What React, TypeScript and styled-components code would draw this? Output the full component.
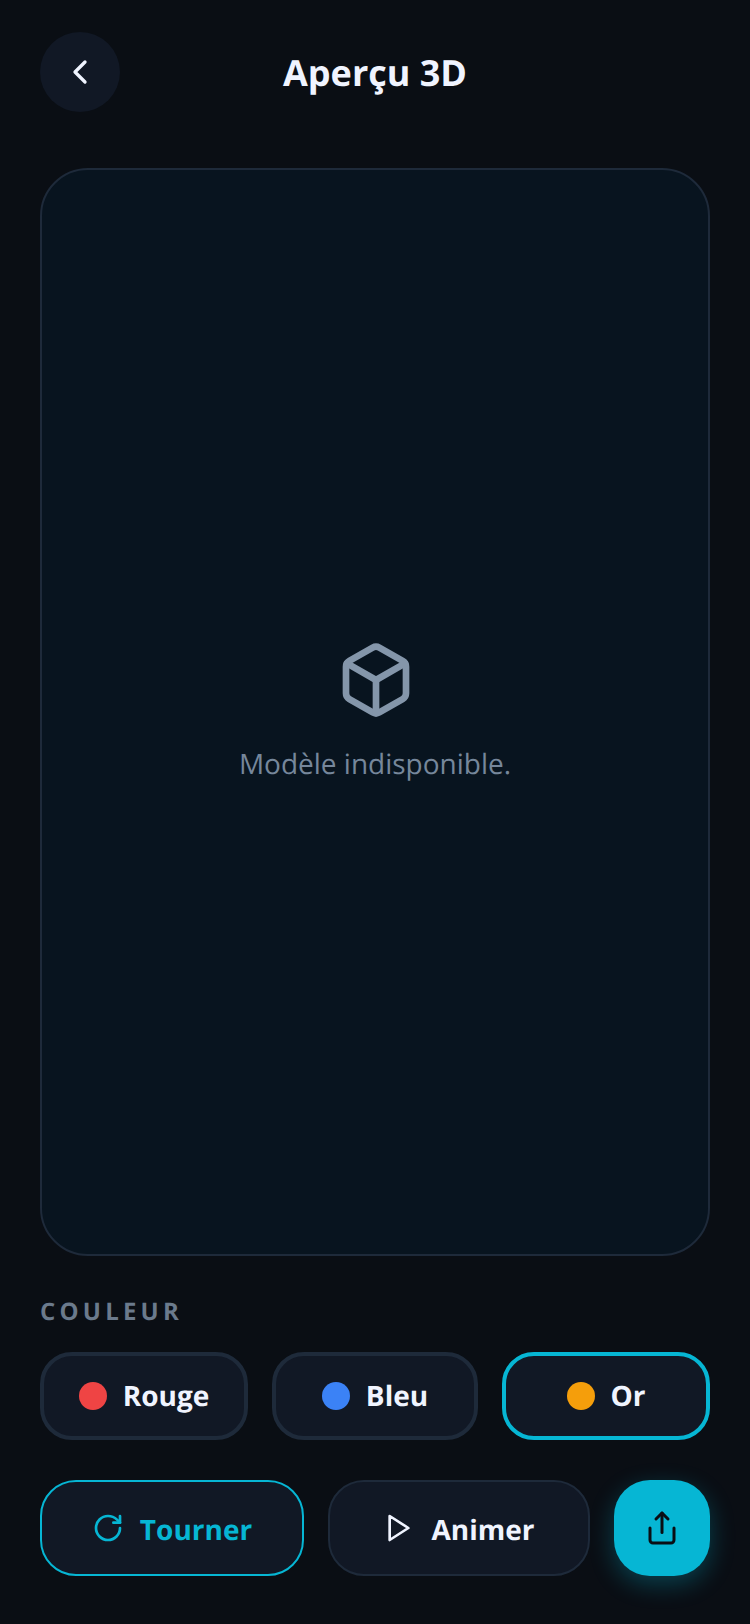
import React from "react";
import styled, { createGlobalStyle } from "styled-components";
import { Box, ChevronLeft, RotateCw, Share } from "lucide-react";

const Global = createGlobalStyle`
  html, body { margin: 0; padding: 0; background: #0a0e14; }
  * { box-sizing: border-box; }
  button { font-family: inherit; margin: 0; text-rendering: inherit; }
`;

const Screen = styled.main`
  width: 750px;
  height: 1624px;
  padding: 32px 40px 48px;
  display: flex;
  flex-direction: column;
  background: #0a0e14;
  font-family: "Open Sans", "Noto Sans", sans-serif;
  text-rendering: geometricPrecision;
  color: #f0f4ff;
`;

const Header = styled.header`
  position: relative;
  height: 80px;
  display: flex;
  align-items: center;
  justify-content: center;
  margin-bottom: 56px;
`;

const BackButton = styled.button`
  position: absolute;
  left: 0;
  top: 0;
  width: 80px;
  height: 80px;
  padding: 0;
  border: 0;
  border-radius: 50%;
  background: #111825;
  color: #f0f4ff;
  display: flex;
  align-items: center;
  justify-content: center;
`;

const Title = styled.h1`
  margin: 2px 0 0;
  font-size: 36px;
  line-height: 1.2;
  font-weight: 700;
  color: #f0f4ff;
`;

const Preview = styled.section`
  flex: 1;
  min-height: 0;
  display: flex;
  flex-direction: column;
  align-items: center;
  justify-content: center;
  gap: 25px;
  border: 2px solid #1e2a3a;
  border-radius: 48px;
  background: #08141f;
`;

const CubeIcon = styled(Box)`
  margin-left: 2px;
  color: #8496aa;
`;

const Message = styled.p`
  margin: 0 0 2px;
  font-size: 28px;
  line-height: 38px;
  color: #76879b;
`;

const SectionLabel = styled.h2`
  margin: 40px 0 24px;
  font-size: 24px;
  line-height: 32px;
  font-weight: 700;
  letter-spacing: 4.2px;
  color: #6b7a8c;
`;

const Swatches = styled.div`
  display: grid;
  grid-template-columns: 208px 206px 208px;
  gap: 24px;
  margin-bottom: 40px;
`;

const Swatch = styled.button<{ $active?: boolean }>`
  height: 88px;
  display: flex;
  align-items: center;
  justify-content: center;
  gap: 16px;
  padding: 0;
  border: 4px solid ${(p) => (p.$active ? "#06b6d4" : "#1e2a3a")};
  border-radius: 32px;
  background: #111825;
  color: #f0f4ff;
  font-size: 28px;
  font-weight: 700;
`;

const Dot = styled.span<{ $color: string }>`
  width: 28px;
  height: 28px;
  border-radius: 50%;
  background: ${(p) => p.$color};
`;

const Actions = styled.div`
  display: grid;
  grid-template-columns: 264px 262px 96px;
  gap: 24px;
`;

const ActionButton = styled.button<{ $active?: boolean }>`
  height: 96px;
  display: flex;
  align-items: center;
  justify-content: center;
  gap: 16px;
  padding: 0;
  border: 2px solid ${(p) => (p.$active ? "#06b6d4" : "#1e2a3a")};
  border-radius: 36px;
  background: #111825;
  color: ${(p) => (p.$active ? "#06b6d4" : "#f0f4ff")};
  font-size: 28px;
  font-weight: 700;
`;

const ActionLabel = styled.span`
  margin-top: 4px;
`;

const ShareButton = styled.button`
  width: 96px;
  height: 96px;
  display: flex;
  align-items: center;
  justify-content: center;
  padding: 0;
  border: 0;
  border-radius: 36px;
  background: #06b6d4;
  color: #0a0e14;
  box-shadow: 0 8px 24px rgba(6, 182, 212, 0.3);
`;

const PlayGlyph = () => (
  <svg width="32" height="32" viewBox="0 0 24 24" fill="none" stroke="currentColor" strokeWidth="2" strokeLinejoin="round" strokeLinecap="round">
    <polygon points="5 3 19 12 5 21 5 3" />
  </svg>
);

export default function App() {
  return (
    <>
      <Global />
      <Screen>
        <Header>
          <BackButton aria-label="Retour">
            <ChevronLeft size={40} strokeWidth={2} />
          </BackButton>
          <Title>Aperçu 3D</Title>
        </Header>
        <Preview>
          <CubeIcon size={80} strokeWidth={2} />
          <Message>Modèle indisponible.</Message>
        </Preview>
        <SectionLabel>COULEUR</SectionLabel>
        <Swatches>
          <Swatch>
            <Dot $color="#ef4444" />
            Rouge
          </Swatch>
          <Swatch>
            <Dot $color="#3b82f6" />
            Bleu
          </Swatch>
          <Swatch $active>
            <Dot $color="#f59e0b" />
            Or
          </Swatch>
        </Swatches>
        <Actions>
          <ActionButton $active>
            <RotateCw size={32} strokeWidth={2} />
            <ActionLabel>Tourner</ActionLabel>
          </ActionButton>
          <ActionButton>
            <PlayGlyph />
            <ActionLabel>Animer</ActionLabel>
          </ActionButton>
          <ShareButton aria-label="Partager">
            <Share size={36} strokeWidth={2} />
          </ShareButton>
        </Actions>
      </Screen>
    </>
  );
}
